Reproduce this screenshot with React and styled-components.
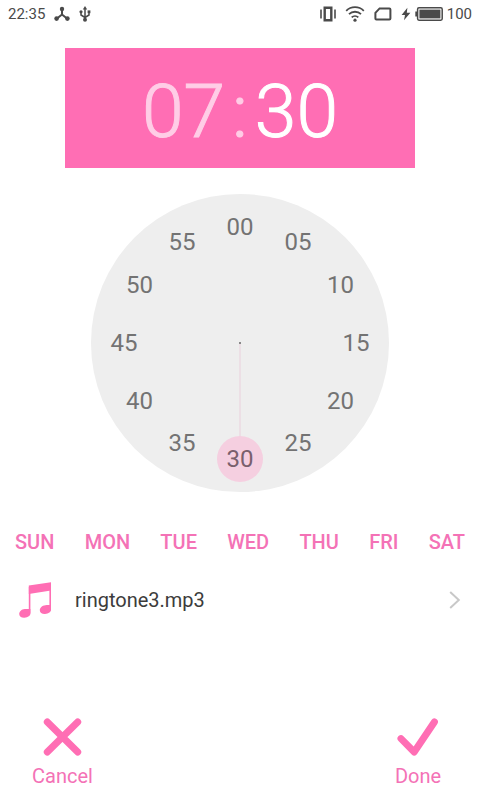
import React, { useState } from 'react';
import styled, { createGlobalStyle } from 'styled-components';

const pink = '#ff6eb4';
const textPink = '#f472b6';
const ink = '#4a4a4a';

const GlobalStyle = createGlobalStyle`
  * {
    box-sizing: border-box;
  }
  body {
    margin: 0;
    background: #ffffff;
    font-family: Roboto, sans-serif;
  }
  button {
    margin: 0;
    padding: 0;
    border: 0;
    background: none;
    font-family: inherit;
    cursor: pointer;
  }
  svg {
    display: block;
  }
`;

const Screen = styled.div`
  display: flex;
  flex-direction: column;
  min-height: 100vh;
`;

const StatusBar = styled.header`
  display: flex;
  justify-content: space-between;
  align-items: center;
  height: 28px;
  padding: 0 8px;
  color: ${ink};
  font-size: 15px;
`;

const StatusGroup = styled.div`
  display: flex;
  align-items: center;
  gap: 9px;
`;

const Battery = styled.div`
  display: flex;
  align-items: center;
  gap: 4px;
`;

const TimePanel = styled.section`
  display: flex;
  justify-content: center;
  align-items: center;
  width: 73%;
  height: 120px;
  margin: 20px auto 0;
  padding-top: 5px;
  background: ${pink};
  font-size: 75px;
  font-weight: 300;
  line-height: 84px;
  -webkit-text-stroke: 1px;
`;

const TimePart = styled.button`
  color: ${({ active }) => (active ? '#ffffff' : '#ffcde6')};
  font-size: inherit;
  font-weight: inherit;
  line-height: inherit;
`;

const Colon = styled.span`
  padding: 0 7px;
  color: #ffcde6;
`;

const Dial = styled.section`
  position: relative;
  width: 62%;
  aspect-ratio: 1;
  margin: 26px auto 0;
  border-radius: 50%;
  background: #eeeeee;
`;

const Hand = styled.div`
  position: absolute;
  top: 50%;
  left: 50%;
  width: 2px;
  height: 39%;
  margin-left: -1px;
  background: #ecdfe5;
  transform-origin: top;
  transform: rotate(${({ minute }) => minute * 6 + 180}deg);
`;

const Pivot = styled.div`
  position: absolute;
  top: 50%;
  left: 50%;
  width: 2px;
  height: 2px;
  margin: -1px;
  background: #888888;
`;

const Minute = styled.button`
  position: absolute;
  left: ${({ minute }) => 50 + 39 * Math.sin((minute * Math.PI) / 30)}%;
  top: ${({ minute }) => 50 - 39 * Math.cos((minute * Math.PI) / 30)}%;
  width: 46px;
  height: 46px;
  margin: -23px;
  border-radius: 50%;
  background: ${({ active }) => (active ? '#f5cfe0' : 'transparent')};
  color: ${({ active }) => (active ? '#79606d' : '#737373')};
  font-size: 24px;
  line-height: 46px;
`;

const Days = styled.div`
  display: flex;
  justify-content: space-between;
  margin-top: 38px;
  padding: 0 15px;
`;

const Day = styled.button`
  color: ${textPink};
  font-size: 20px;
  font-weight: 500;
  line-height: 24px;
`;

const Ringtone = styled.button`
  display: flex;
  align-items: center;
  gap: 22px;
  height: 60px;
  margin-top: 16px;
  padding: 0 18px;
  color: #3c3c3c;
  font-size: 20px;
  text-align: left;
`;

const RingtoneName = styled.span`
  flex: 1;
`;

const Actions = styled.footer`
  display: flex;
  justify-content: space-between;
  margin-top: auto;
  padding: 0 32px 12px;
`;

const Action = styled.button`
  display: flex;
  flex-direction: column;
  align-items: center;
  gap: 7px;
  min-width: 60px;
  color: ${textPink};
  font-size: 20px;
  line-height: 24px;
`;

const HubIcon = () => (
  <svg width="16" height="16" viewBox="0 0 16 16" fill={ink} stroke={ink} aria-hidden="true">
    <path d="M8 3v5.5M8 8.5l-5 4M8 8.5l5 4" fill="none" strokeWidth="2" />
    <circle cx="8" cy="3" r="2.2" stroke="none" />
    <circle cx="2.6" cy="12.6" r="2.3" stroke="none" />
    <circle cx="13.4" cy="12.6" r="2.3" stroke="none" />
  </svg>
);

const UsbIcon = () => (
  <svg width="12" height="16" viewBox="0 0 12 16" fill={ink} stroke={ink} aria-hidden="true">
    <path d="M6 3v10M2 6v3l4 2.5M10 6v3l-4 2.5" fill="none" strokeWidth="1.5" />
    <path d="M6 0l2.2 3.6H3.8z" stroke="none" />
    <circle cx="2" cy="5.8" r="1.6" stroke="none" />
    <path d="M8.6 4.4h2.8v2.8H8.6z" stroke="none" />
    <circle cx="6" cy="13.8" r="2" stroke="none" />
  </svg>
);

const VibrateIcon = () => (
  <svg width="16" height="16" viewBox="0 0 16 16" fill="none" stroke={ink} aria-hidden="true">
    <path d="M4.7 1.8h6.6v12.4H4.700z" strokeWidth="2.4" />
    <path d="M1 3.500v9M15 3.500v9" strokeWidth="1.6" />
  </svg>
);

const WifiIcon = () => (
  <svg width="20" height="16" viewBox="0 0 20 16" fill="none" stroke={ink} aria-hidden="true">
    <path d="M1.2 4.8a12.6 12.6 0 0 1 17.6 0" strokeWidth="1.8" />
    <path d="M4 8.2a8.6 8.6 0 0 1 12 0" strokeWidth="1.8" />
    <path d="M6.7 11.4a4.8 4.8 0 0 1 6.6 0" strokeWidth="1.8" />
    <circle cx="10" cy="14.2" r="1.6" fill={ink} stroke="none" />
  </svg>
);

const SimIcon = () => (
  <svg width="18" height="14" viewBox="0 0 18 14" fill="none" stroke={ink} aria-hidden="true">
    <path d="M5.6 1.4h9.8a1 1 0 0 1 1 1v9.2a1 1 0 0 1-1 1H2.4a1 1 0 0 1-1-1V5.8z" strokeWidth="2" />
  </svg>
);

const BoltIcon = () => (
  <svg width="10" height="14" viewBox="0 0 10 14" fill={ink} aria-hidden="true">
    <path d="M6.4 0.8L0.6 8h3.4L3 13.2 9.4 5.8H5.8z" />
  </svg>
);

const BatteryIcon = () => (
  <svg width="28" height="14" viewBox="0 0 28 14" aria-hidden="true">
    <path d="M0.3 4.5h2v5h-2z" fill={ink} />
    <rect x="2.6" y="0.8" width="24.6" height="12.4" rx="1.4" fill="none" stroke={ink} strokeWidth="1.5" />
    <path d="M4.4 2.6h21v8.8h-21z" fill={ink} />
  </svg>
);

const MusicIcon = () => (
  <svg width="35" height="38" viewBox="0 0 35 38" fill={pink} aria-hidden="true">
    <path d="M10.8 4.6L33 1.2V9.6L10.8 13z" />
    <path d="M11.6 6v26.4M32.2 4v25.4" stroke={pink} strokeWidth="1.6" />
    <path d="M12.4 28v4.6c0 2.2-2.4 4-6 4.200-3.200.1-5.200-1.200-5.200-3.700 0-2.700 2.200-4.700 5.600-5.100 2.400-.2 4.200-.1 5.600 0z" />
    <path d="M33 24.200v4.600c0 2.200-2.400 4-6 4.200-3.200.1-5.200-1.200-5.200-3.700 0-2.700 2.200-4.700 5.600-5.100 2.400-.2 4.200-.1 5.600 0z" />
  </svg>
);

const ChevronIcon = () => (
  <svg width="13" height="20" viewBox="0 0 13 20" fill="none" stroke="#c8c8c8" strokeWidth="2" aria-hidden="true">
    <path d="M1.2 2l8.6 8-8.6 8" />
  </svg>
);

const CrossIcon = () => (
  <svg width="40" height="40" viewBox="0 0 40 40" fill="none" stroke={pink} strokeWidth="7" strokeLinecap="round" aria-hidden="true">
    <path d="M5.3 5L35.7 35M35.7 5L5.3 35" />
  </svg>
);

const CheckIcon = () => (
  <svg width="42" height="40" viewBox="0 0 42 40" fill="none" stroke={pink} strokeWidth="7" strokeLinecap="round" strokeLinejoin="round" aria-hidden="true">
    <path d="M4 21.6L17.2 35L37.4 5" />
  </svg>
);

const minutes = [0, 5, 10, 15, 20, 25, 30, 35, 40, 45, 50, 55];
const days = ['SUN', 'MON', 'TUE', 'WED', 'THU', 'FRI', 'SAT'];

const pad = n => String(n).padStart(2, '0');

const App = () => {
  const [minute, setMinute] = useState(30);
  return (
    <Screen>
      <GlobalStyle />
      <StatusBar>
        <StatusGroup>
          <span>22:35</span>
          <HubIcon />
          <UsbIcon />
        </StatusGroup>
        <StatusGroup>
          <VibrateIcon />
          <WifiIcon />
          <SimIcon />
          <Battery>
            <BoltIcon />
            <BatteryIcon />
            <span>100</span>
          </Battery>
        </StatusGroup>
      </StatusBar>
      <TimePanel>
        <TimePart type="button">07</TimePart>
        <Colon>:</Colon>
        <TimePart type="button" active>{pad(minute)}</TimePart>
      </TimePanel>
      <Dial>
        <Hand minute={minute} />
        <Pivot />
        {minutes.map(m => (
          <Minute
            key={m}
            type="button"
            minute={m}
            active={m === minute}
            aria-pressed={m === minute}
            onClick={() => setMinute(m)}
          >
            {pad(m)}
          </Minute>
        ))}
      </Dial>
      <Days>
        {days.map(day => (
          <Day key={day} type="button">{day}</Day>
        ))}
      </Days>
      <Ringtone type="button">
        <MusicIcon />
        <RingtoneName>ringtone3.mp3</RingtoneName>
        <ChevronIcon />
      </Ringtone>
      <Actions>
        <Action type="button">
          <CrossIcon />
          Cancel
        </Action>
        <Action type="button">
          <CheckIcon />
          Done
        </Action>
      </Actions>
    </Screen>
  );
};

export default App;
